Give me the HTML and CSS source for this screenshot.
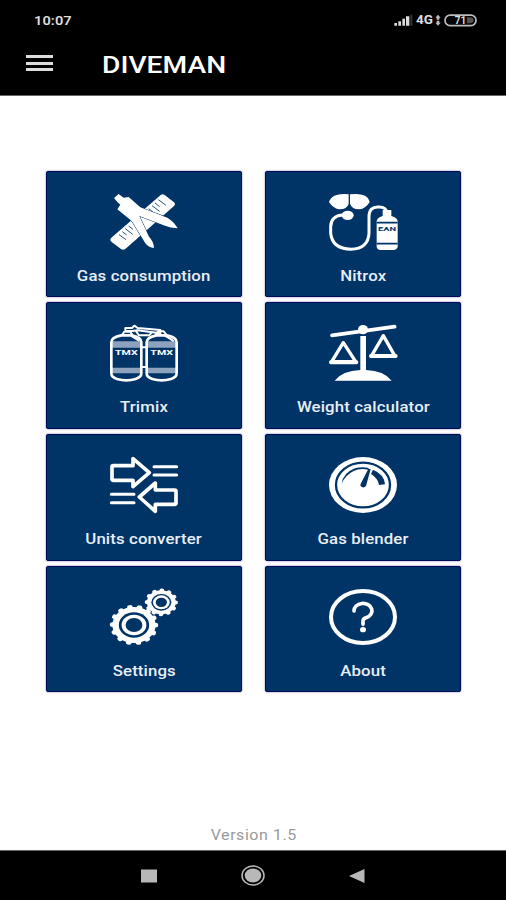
FILE: index.html
```
<!DOCTYPE html>
<html lang="en">
  <head>
    <title>Diveman</title>
    <meta charset="utf-8" />
    <link rel="stylesheet" href="styles.css">
  </head>
  <body>
    <header>
      <div class="status">
        <span class="clock">10:07</span>
        <div class="indicators">
          <svg class="signal" viewBox="0 0 60 36">
            <path d="M4 35v-8h8v8zM16 35V22h8v13zM28 35V14h8v21zM39 35V7h10v28z" fill="#ddd" />
            <path d="M52 35V2h6v33z" fill="#333" />
          </svg>
          <span class="network">4G</span>
          <svg class="data" viewBox="0 0 18 36">
            <path d="M9 2l8 9h-4v6H5v-6H1zM9 35l8-9h-4v-6H5v6H1z" fill="#bbb" />
          </svg>
          <svg class="battery" viewBox="0 0 98 38">
            <rect x="3" y="3" width="92" height="31" rx="15" fill="none" stroke="#bbb" stroke-width="5" />
            <path d="M68 9h10q10 2 10 9t-10 9H68z" fill="#555" />
            <text x="32" y="29" textLength="34" lengthAdjust="spacingAndGlyphs">71</text>
          </svg>
        </div>
      </div>
      <div class="bar">
        <div class="burger"><i></i><i></i><i></i></div>
        <h1>DIVEMAN</h1>
      </div>
    </header>

    <main>
      <div class="tile">
        <svg class="icon" viewBox="0 0 204 168">
          <path class="w" d="M152 3q6-5 12 0l28 22q6 6 0 11L46 165q-7 5-13 0L4 143q-6-6 0-12z" />
          <path class="cut" d="M145 17l23 17M135 27l14 11M126 35l23 17M116 44l14 11M56 96l13 10M46 104l22 17M37 113l13 10M27 122l21 15" stroke-width="2.500" />
          <path class="w outlined" d="M12 12L26 0 41 11 56 9 91 40 172 71Q193 84 203 103 180 102 165 95L88 66 117 128Q131 142 132 162 115 160 106 148L66 82 22 46 31 32 22 24z" />
        </svg>
        <span class="label">Gas consumption</span>
      </div>
      <div class="tile">
        <svg class="icon" viewBox="0 0 204 168">
          <path class="w" d="M59 1Q32-2 16 5 2 13 0 25q15 20 31 21 22 1 28-17zM63 1q29-4 45 4 12 7 14 20-14 20-30 21-23 1-29-17z" />
          <ellipse class="w" cx="56" cy="64" rx="18" ry="14" />
          <path class="line" d="M42 63Q6 65 5 98v19q4 47 61 49 52-2 54-49V67q1-29 28-28 23-1 26 17" stroke-width="9" />
          <path class="w" d="M161 48h26v18q19 6 19 16v77q-3 9-13 9h-38q-10 0-12-9V82q0-10 18-16z" />
          <path class="cut" d="M143 86h63M143 149h63" stroke-width="5" />
          <text class="dark" x="147" y="112" font-size="18" textLength="54" lengthAdjust="spacingAndGlyphs">EAN</text>
        </svg>
        <span class="label">Nitrox</span>
      </div>
      <div class="tile">
        <svg class="icon" viewBox="0 0 204 168">
          <g id="tank">
            <path d="M4 49h90v19H4zM4 128h90v17H4z" fill="#8da2bd" />
            <path class="line" d="M34 31Q4 36 4 52v93q0 12 17 17 28 8 56 0 17-5 17-17V52Q94 36 64 31z" stroke-width="8" />
            <text class="light" x="15" y="89" font-size="22" textLength="68" lengthAdjust="spacingAndGlyphs">TMX</text>
          </g>
          <use href="#tank" x="106" />
          <path class="line" d="M94 67h16M94 126h16M37 29l6-9h17l7 9M137 29l7-10h17l10 12M66 34l20 12M164 31l25 16" stroke-width="6" />
          <path class="line" d="M46 18V9h20l7-7 10 7 68 6v10L82 16 66 18zM79 20l8 11h30l9-9" stroke-width="6" />
        </svg>
        <span class="label">Trimix</span>
      </div>
      <div class="tile">
        <svg class="icon" viewBox="0 0 204 168">
          <path class="line" d="M9 31L197 5" stroke-width="11" />
          <ellipse class="w" cx="102" cy="14" rx="15" ry="14" />
          <path class="w" d="M94 33h17v102q54 2 77 32H17q23-30 77-32z" />
          <path class="line" d="M43 53L8 110h72zM163 32l-35 60h69z" stroke-width="10" />
          <path class="line" d="M6 112h76M126 93h74" stroke-width="12" />
        </svg>
        <span class="label">Weight calculator</span>
      </div>
      <div class="tile">
        <svg class="icon" viewBox="0 0 204 168">
          <path class="line" d="M10 26h59V5l49 42-49 42V70H10q-4 0-4-4V30q0-4 4-4zM194 99h-58V78L88 120l48 43v-21h58q4 0 4-4v-35q0-4-4-4z" stroke-width="11" />
          <path class="line" d="M132 29h68M132 54h68M4 112h68M4 137h68" stroke-width="9" />
        </svg>
        <span class="label">Units converter</span>
      </div>
      <div class="tile">
        <svg class="icon" viewBox="0 0 204 168">
          <ellipse class="w" cx="102" cy="84" rx="102" ry="84" />
          <ellipse class="cut" cx="102" cy="84" rx="81" ry="67" stroke-width="7" />
          <path class="b" d="M38 80Q42 48 78 34q20-6 41-1l-1 5Q92 33 74 42 49 54 38 80zM132 38q34 14 36 44l-18 2q-3-20-24-33zM118 36h7l-14 51q-7 8-16 1-2-5 1-9z" />
        </svg>
        <span class="label">Gas blender</span>
      </div>
      <div class="tile">
        <svg class="icon" viewBox="0 0 204 168">
          <g transform="translate(72 108) scale(1.2 1)">
            <circle class="w" r="54" />
            <circle class="teeth" r="54" pathLength="28" />
            <circle class="b" r="38" />
            <circle class="w" r="31" />
            <circle class="b" r="21" />
          </g>
          <g transform="translate(154 40) scale(1.2 1)">
            <circle class="w" r="36" />
            <circle class="teeth small" r="36" pathLength="24" />
            <circle class="b" r="25" />
            <circle class="w" r="21" />
            <circle class="b" r="14" />
          </g>
        </svg>
        <span class="label">Settings</span>
      </div>
      <div class="tile">
        <svg class="icon" viewBox="0 0 204 168">
          <ellipse class="line" cx="102" cy="84" rx="96" ry="78" stroke-width="12" />
          <path class="line" d="M75 66A27 22 0 1 1 111 86Q102 89 102 96v10" stroke-width="11" />
          <ellipse class="w" cx="102" cy="122" rx="9" ry="8" />
        </svg>
        <span class="label">About</span>
      </div>
    </main>

    <p class="version"><span>Version 1.5</span></p>

    <footer>
      <svg viewBox="0 0 16 14" width="16" height="14"><path d="M0 .5h16v13H0z" fill="#b8b8b8" /></svg>
      <svg viewBox="0 0 24 21" width="24" height="21">
        <ellipse cx="12" cy="10.5" rx="11" ry="9.6" fill="none" stroke="#b8b8b8" stroke-width="1.5" />
        <ellipse cx="12" cy="10.5" rx="8.3" ry="7" fill="#b8b8b8" />
      </svg>
      <svg viewBox="0 0 16 14" width="16" height="14"><path d="M15.500 0v14L0 7z" fill="#b8b8b8" /></svg>
    </footer>
  </body>
</html>
```
FILE: styles.css
```
* {
  box-sizing: border-box;
}

body {
  margin: 0;
  height: 900px;
  display: flex;
  flex-direction: column;
  background: #fff;
  font-family: Roboto, "Liberation Sans", sans-serif;
  font-weight: 500;
  overflow: hidden;
}

header {
  height: 96px;
  background: #000;
  color: #fff;
  border-bottom: 1px solid #666;
}

.status {
  height: 40px;
  padding: 0 29px 0 34px;
  display: flex;
  justify-content: space-between;
  align-items: center;
}

.clock {
  font-size: 13px;
  font-weight: 600;
  color: #ddd;
  letter-spacing: 0.1px;
  transform: scaleX(1.12);
  transform-origin: left;
}

.indicators {
  display: flex;
  align-items: center;
}

.signal {
  width: 20px;
  height: 12px;
}

.network {
  width: 18px;
  margin-left: 3px;
  font-size: 12px;
  font-weight: 700;
  color: #ddd;
  transform: scaleX(1.12);
  transform-origin: left;
}

.data {
  width: 6px;
  height: 12px;
  margin: 0 3px 0 1px;
}

.battery {
  width: 33px;
  height: 13px;
}

.battery text {
  font-size: 30px;
  font-weight: 700;
  fill: #ddd;
}

.bar {
  height: 48px;
  padding-left: 26px;
  display: flex;
  align-items: center;
}

.burger {
  width: 27px;
  height: 16px;
  margin-top: -2px;
  display: flex;
  flex-direction: column;
  justify-content: space-between;
}

.burger i {
  height: 3px;
  background: #ddd;
}

h1 {
  margin: 2px 0 0 49px;
  font-size: 24px;
  line-height: 28px;
  font-weight: 500;
  transform: scaleX(1.175);
  transform-origin: left;
}

main {
  flex: 1;
  padding: 74.800px 45px 0 46px;
  display: grid;
  grid-template-columns: 196px 196px;
  grid-auto-rows: 126.500px;
  align-content: start;
  gap: 5.200px 23px;
}

.tile {
  padding-top: 22px;
  display: flex;
  flex-direction: column;
  align-items: center;
  background: #003366;
  border: 1px solid #000b58;
  border-radius: 2px;
  box-shadow: 0 0 2px #6a6aa8;
}

.icon {
  width: 68px;
  height: 56px;
  overflow: visible;
}

.label {
  margin-top: 17px;
  font-size: 14px;
  line-height: 18px;
  color: #e8eef6;
  letter-spacing: 0.1px;
  white-space: nowrap;
  transform: scaleX(1.2);
}

.w {
  fill: #fff;
}

.b {
  fill: #003366;
}

.line {
  fill: none;
  stroke: #fff;
  stroke-linejoin: round;
  stroke-linecap: round;
}

.cut {
  fill: none;
  stroke: #003366;
}

.outlined {
  stroke: #003366;
  stroke-width: 3px;
  stroke-linejoin: round;
  paint-order: stroke;
}

/* round caps on very short dashes make the rounded teeth */
.teeth {
  fill: none;
  stroke: #fff;
  stroke-width: 13px;
  stroke-linecap: round;
  stroke-dasharray: 0.100 1.900;
}

.teeth.small {
  stroke-width: 11px;
}

.icon text {
  font-weight: 700;
}

.dark {
  fill: #003366;
}

.light {
  fill: #fff;
}

.version {
  margin: 0;
  height: 33px;
  font-size: 14px;
  font-weight: 400;
  line-height: 36px;
  text-align: center;
  color: #999;
  letter-spacing: 0.5px;
}

.version span {
  display: inline-block;
  transform: translateX(1px) scaleX(1.14);
}

footer {
  height: 50px;
  padding: 0 141px;
  display: flex;
  justify-content: space-between;
  align-items: center;
  background: #000;
  border-top: 1px solid #666;
}
```
